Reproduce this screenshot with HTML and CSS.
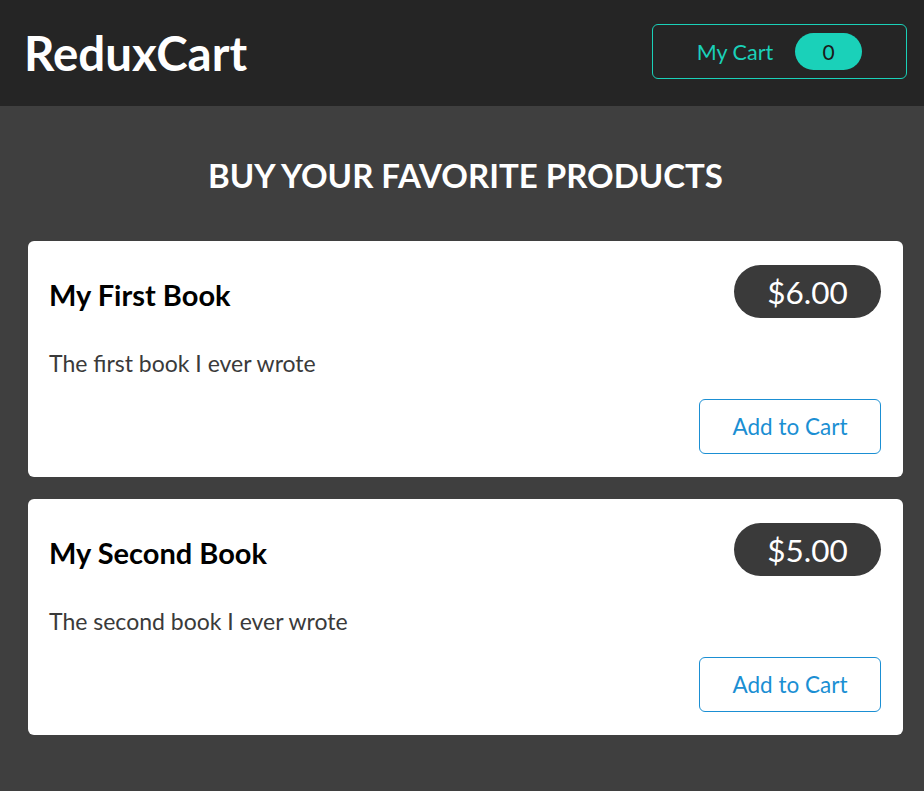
FILE: index.html
```html
<!DOCTYPE html>
<html lang="en">
<head>
<meta charset="utf-8">
<title>ReduxCart</title>
<link rel="stylesheet" href="styles.css">
</head>
<body>
<header class="header">
  <h1 class="logo">ReduxCart</h1>
  <button class="cart-button">
    <span class="cart-label">My Cart</span>
    <span class="badge">0</span>
  </button>
</header>
<main class="products">
  <h2 class="products-title">Buy your favorite products</h2>
  <ul class="product-list">
    <li class="card">
      <div class="card-head">
        <h3 class="card-title">My First Book</h3>
        <div class="price">$6.00</div>
      </div>
      <p class="card-desc">The first book I ever wrote</p>
      <div class="card-actions">
        <button class="add-button">Add to Cart</button>
      </div>
    </li>
    <li class="card">
      <div class="card-head">
        <h3 class="card-title">My Second Book</h3>
        <div class="price">$5.00</div>
      </div>
      <p class="card-desc">The second book I ever wrote</p>
      <div class="card-actions">
        <button class="add-button">Add to Cart</button>
      </div>
    </li>
  </ul>
</main>
</body>
</html>
```
FILE: styles.css
```css
* { box-sizing: border-box; }
html, body {
  margin: 0;
  padding: 0;
  background: #3f3f3f;
  font-family: "Lato", "Liberation Sans", sans-serif;
}
.header {
  height: 106px;
  background: #252525;
  display: flex;
  align-items: center;
  justify-content: space-between;
  padding: 0 17px 0 24px;
}
.logo {
  margin: 0;
  color: #fff;
  font-size: 47.5px;
  font-weight: 700;
  line-height: 1;
}
.cart-button {
  width: 255px;
  height: 55px;
  margin-bottom: 3px;
  border: 1px solid #1ad1b9;
  border-radius: 6px;
  background: transparent;
  display: flex;
  align-items: center;
  justify-content: center;
  gap: 22px;
  font-family: inherit;
  padding: 0;
}
.cart-label {
  color: #1ad1b9;
  font-size: 21.5px;
}
.badge {
  background: #1ad1b9;
  color: #1a1a1a;
  width: 67px;
  height: 37px;
  border-radius: 20px;
  display: flex;
  align-items: center;
  justify-content: center;
  font-size: 21px;
}
.products {
  padding: 0 21px 0 28px;
}
.products-title {
  margin: 0;
  padding: 49px 0 46px;
  text-align: center;
  color: #fff;
  font-size: 33px;
  font-weight: 700;
  text-transform: uppercase;
  line-height: 40px;
}
.product-list {
  list-style: none;
  margin: 0;
  padding: 0;
  display: flex;
  flex-direction: column;
  gap: 22px;
}
.card {
  background: #fff;
  border-radius: 6px;
  padding: 24px 22px 22px;
  height: 236px;
}
.card-head {
  display: flex;
  justify-content: space-between;
  align-items: center;
}
.card-title {
  margin: 5px 0 0 -1px;
  font-size: 29px;
  font-weight: 700;
  color: #000;
}
.price {
  background: #3a3a3a;
  color: #fff;
  border-radius: 27px;
  width: 147px;
  height: 53px;
  display: flex;
  align-items: center;
  justify-content: center;
  font-size: 31.5px;
}
.card-desc {
  margin: 31px 0 0 -1px;
  color: #3a3a3a;
  font-size: 23px;
  line-height: 28px;
}
.card-actions {
  display: flex;
  justify-content: flex-end;
  margin-top: 22px;
}
.add-button {
  width: 182px;
  height: 55px;
  border: 1px solid #1b8fd3;
  border-radius: 6px;
  background: #fff;
  color: #1b8fd3;
  font-family: inherit;
  font-size: 22.5px;
  padding: 0;
}
```
